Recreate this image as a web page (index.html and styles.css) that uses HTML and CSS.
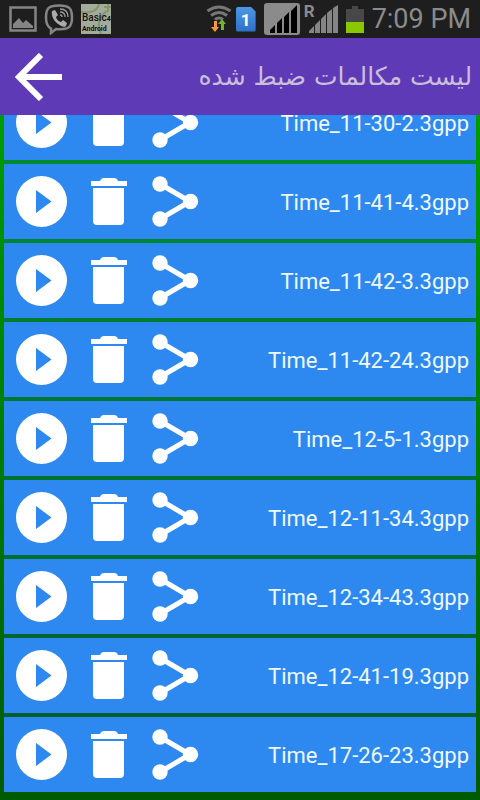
FILE: index.html
```html
<!DOCTYPE html>
<html lang="fa">
<head>
<meta charset="utf-8">
<meta name="viewport" content="width=device-width, initial-scale=1">
<title>لیست مکالمات ضبط شده</title>
<link rel="stylesheet" href="styles.css">
</head>
<body>
<svg class="defs" aria-hidden="true">
  <symbol id="play" viewBox="0 0 52 52"><path fill-rule="evenodd" d="M26.500 0a25.500 25.500 0 1 0 0 51a25.500 25.500 0 1 0 0-51zM21 14V37L36.500 25.500z"/></symbol>
  <symbol id="trash" viewBox="0 0 36 52"><path d="M0 5h9q1-3 4-3h10q3 0 4 3h9v5H0zM2 12h31v33q0 4-4 4H6q-4 0-4-4z"/></symbol>
  <symbol id="share" viewBox="0 0 48 52"><path d="M9 8L39 25.500L9 43" fill="none" stroke="#fff" stroke-width="5"/><circle cx="9" cy="8" r="7.700"/><circle cx="39.500" cy="25.500" r="7.700"/><circle cx="9" cy="43" r="7.700"/></symbol>
</svg>
<div class="status">
  <div class="notices">
    <svg width="28" height="28" viewBox="0 0 28 28"><path d="M1.500 2.500h25v23h-25z" fill="none" stroke="#858585" stroke-width="2.500"/><path d="M4 23v-4l6-6 4 5 3-3 7 6v2z" fill="#858585"/></svg>
    <svg width="30" height="32" viewBox="0 0 30 32"><path d="M15 2.500C5 2.500 2 5 2 14.500c0 6 1 9 5 11V30l5-4c12 1 16-1 16-11.500C28 5 25 2.500 15 2.500z" fill="none" stroke="#858585" stroke-width="2.500"/><path d="M8 8l3-1 3 5-2 2c1 3 2 4 5 5l2-2 4 3-1 3c-2 2-5 0-8-2-4-3-7-8-6-13z" fill="#aaa"/><path d="M16 6c5 0 8 3 8 8M16 9c3 0 5 2 5 5M16 12c1 0 2 1 2 2" fill="none" stroke="#999" stroke-width="1.300"/></svg>
    <div class="basic"><svg class="leaf" width="30" height="30" viewBox="0 0 30 30"><path d="M0 8C12 10 17 5 18 0M20 30c-4-7-3-19 8-24M23 3h7M27 0v8" stroke="#84976a" stroke-width="2" fill="none"/></svg><span>Basic<small>4</small></span><b>Android</b></div>
  </div>
  <div class="signals">
    <svg width="26" height="28" viewBox="0 0 26 28"><g fill="none" stroke="#777" stroke-width="3"><path d="M1.500 6q11.500-8 23 0M5 10.500q8-6 16 0M9 14.500q4-3 8 0"/></g><path d="M8 16h3v6h2l-4 5-4-5h3z" fill="#f59a3c"/><path d="M15 25v-6h-3l4-5 4 5h-2v6z" fill="#72b52c"/></svg>
    <div class="sim">1</div>
    <svg width="36" height="32" viewBox="0 0 36 32"><rect width="36" height="32" rx="3" fill="#8b8b8b"/><path d="M6 30v-3l5-5v8zM13 30V20l5-5v15zM20 30V14l5-5v21zM27 30V8l6-6v28z" fill="#000"/></svg>
    <div class="roaming"><span>R</span><svg width="30" height="28" viewBox="0 0 30 28"><path d="M0 28v-2l5-5v7zM6 28v-8l5-5v13zM12 28V14l5-5v19zM18 28V8l5-4v24zM24 28V3l5-3v28z" fill="#858585"/></svg></div>
    <svg width="18" height="27" viewBox="0 0 18 27"><path d="M0 3h6V0h6v3h6v13H0z" fill="#484848"/><path d="M0 16h18v11H0z" fill="#8ac800"/></svg>
    <time>7:09 PM</time>
  </div>
</div>
<header>
  <button class="back" aria-label="بازگشت"><svg width="48" height="48" viewBox="0 0 48 48"><path d="M26 2L4 24L26 46M4 24h43" fill="none" stroke="#fff" stroke-width="6"/></svg></button>
  <h1 dir="rtl">لیست مکالمات ضبط شده</h1>
</header>
<main>
  <ul>
    <li><button aria-label="Play"><svg width="52" height="52"><use href="#play"/></svg></button><button aria-label="Delete"><svg width="36" height="52"><use href="#trash"/></svg></button><button aria-label="Share"><svg width="48" height="52"><use href="#share"/></svg></button><span class="name">Time_11-30-2.3gpp</span></li>
    <li><button aria-label="Play"><svg width="52" height="52"><use href="#play"/></svg></button><button aria-label="Delete"><svg width="36" height="52"><use href="#trash"/></svg></button><button aria-label="Share"><svg width="48" height="52"><use href="#share"/></svg></button><span class="name">Time_11-41-4.3gpp</span></li>
    <li><button aria-label="Play"><svg width="52" height="52"><use href="#play"/></svg></button><button aria-label="Delete"><svg width="36" height="52"><use href="#trash"/></svg></button><button aria-label="Share"><svg width="48" height="52"><use href="#share"/></svg></button><span class="name">Time_11-42-3.3gpp</span></li>
    <li><button aria-label="Play"><svg width="52" height="52"><use href="#play"/></svg></button><button aria-label="Delete"><svg width="36" height="52"><use href="#trash"/></svg></button><button aria-label="Share"><svg width="48" height="52"><use href="#share"/></svg></button><span class="name">Time_11-42-24.3gpp</span></li>
    <li><button aria-label="Play"><svg width="52" height="52"><use href="#play"/></svg></button><button aria-label="Delete"><svg width="36" height="52"><use href="#trash"/></svg></button><button aria-label="Share"><svg width="48" height="52"><use href="#share"/></svg></button><span class="name">Time_12-5-1.3gpp</span></li>
    <li><button aria-label="Play"><svg width="52" height="52"><use href="#play"/></svg></button><button aria-label="Delete"><svg width="36" height="52"><use href="#trash"/></svg></button><button aria-label="Share"><svg width="48" height="52"><use href="#share"/></svg></button><span class="name">Time_12-11-34.3gpp</span></li>
    <li><button aria-label="Play"><svg width="52" height="52"><use href="#play"/></svg></button><button aria-label="Delete"><svg width="36" height="52"><use href="#trash"/></svg></button><button aria-label="Share"><svg width="48" height="52"><use href="#share"/></svg></button><span class="name">Time_12-34-43.3gpp</span></li>
    <li><button aria-label="Play"><svg width="52" height="52"><use href="#play"/></svg></button><button aria-label="Delete"><svg width="36" height="52"><use href="#trash"/></svg></button><button aria-label="Share"><svg width="48" height="52"><use href="#share"/></svg></button><span class="name">Time_12-41-19.3gpp</span></li>
    <li><button aria-label="Play"><svg width="52" height="52"><use href="#play"/></svg></button><button aria-label="Delete"><svg width="36" height="52"><use href="#trash"/></svg></button><button aria-label="Share"><svg width="48" height="52"><use href="#share"/></svg></button><span class="name">Time_17-26-23.3gpp</span></li>
  </ul>
</main>
</body>
</html>
```
FILE: styles.css
```css
* { box-sizing: border-box; }
body {
  margin: 0;
  height: 100vh;
  display: flex;
  flex-direction: column;
  overflow: hidden;
  font-family: Roboto, "DejaVu Sans", sans-serif;
}
svg { display: block; flex: none; }
button { display: block; padding: 0; border: 0; background: none; }
.defs { position: absolute; width: 0; height: 0; }
.status {
  flex: none;
  display: flex;
  justify-content: space-between;
  align-items: center;
  height: 38px;
  padding: 0 9px;
  background: #1e1e1e;
}
.notices, .signals { display: flex; align-items: center; }
.notices { gap: 7px; }
.signals { gap: 4px; }
.basic {
  position: relative;
  width: 30px;
  height: 30px;
  padding: 8px 0 0 1px;
  background: #a5aa9c;
  color: #111;
  font-size: 10px;
  font-weight: 500;
  line-height: 11px;
}
.basic span, .basic b { position: relative; display: block; white-space: nowrap; }
.basic small { font-size: 7px; font-weight: 700; }
.basic b { font-size: 7px; line-height: 9px; }
.leaf { position: absolute; top: 0; left: 0; }
.sim {
  width: 20px;
  height: 25px;
  border-radius: 2px;
  clip-path: polygon(0 0, 75% 0, 100% 20%, 100% 100%, 0 100%);
  background: linear-gradient(#4c97e6, #2d70c8);
  color: #fff;
  font-size: 17px;
  font-weight: 700;
  line-height: 26px;
  text-align: center;
}
.signals > svg:nth-of-type(2) { margin-left: 4px; }
.roaming { position: relative; padding-left: 5px; margin-right: 3px; }
.roaming span {
  position: absolute;
  top: -1px;
  left: 0;
  color: #8b8b8b;
  font-size: 17px;
  font-weight: 700;
  line-height: 15px;
}
time {
  margin-left: 4px;
  color: #8b8b8b;
  font-size: 27px;
  line-height: 32px;
  white-space: nowrap;
}
header {
  flex: none;
  display: flex;
  align-items: center;
  justify-content: space-between;
  height: 77px;
  padding: 0 8px 0 15px;
  background: #5f3ab6;
}
h1 {
  margin: 0;
  color: #cabfd9;
  font-family: "DejaVu Sans", sans-serif;
  font-size: 25px;
  font-weight: 400;
  line-height: 32px;
}
main {
  flex: 1;
  min-height: 0;
  display: flex;
  flex-direction: column;
  justify-content: flex-end;
  overflow: hidden;
  padding: 0 4px 8px;
  background: linear-gradient(#009c00, #005a00);
}
ul {
  display: flex;
  flex-direction: column;
  gap: 4px;
  margin: 0;
  padding: 0;
  list-style: none;
  background: rgba(0, 90, 240, 0.2);
}
li {
  display: flex;
  align-items: center;
  height: 75px;
  padding: 0 7px 0 11px;
  background: #2d89ef;
}
li button { fill: #fff; margin-right: 24px; }
.name {
  margin-left: auto;
  padding-top: 2px;
  color: #eefaff;
  font-size: 22px;
  line-height: 28px;
}
```
